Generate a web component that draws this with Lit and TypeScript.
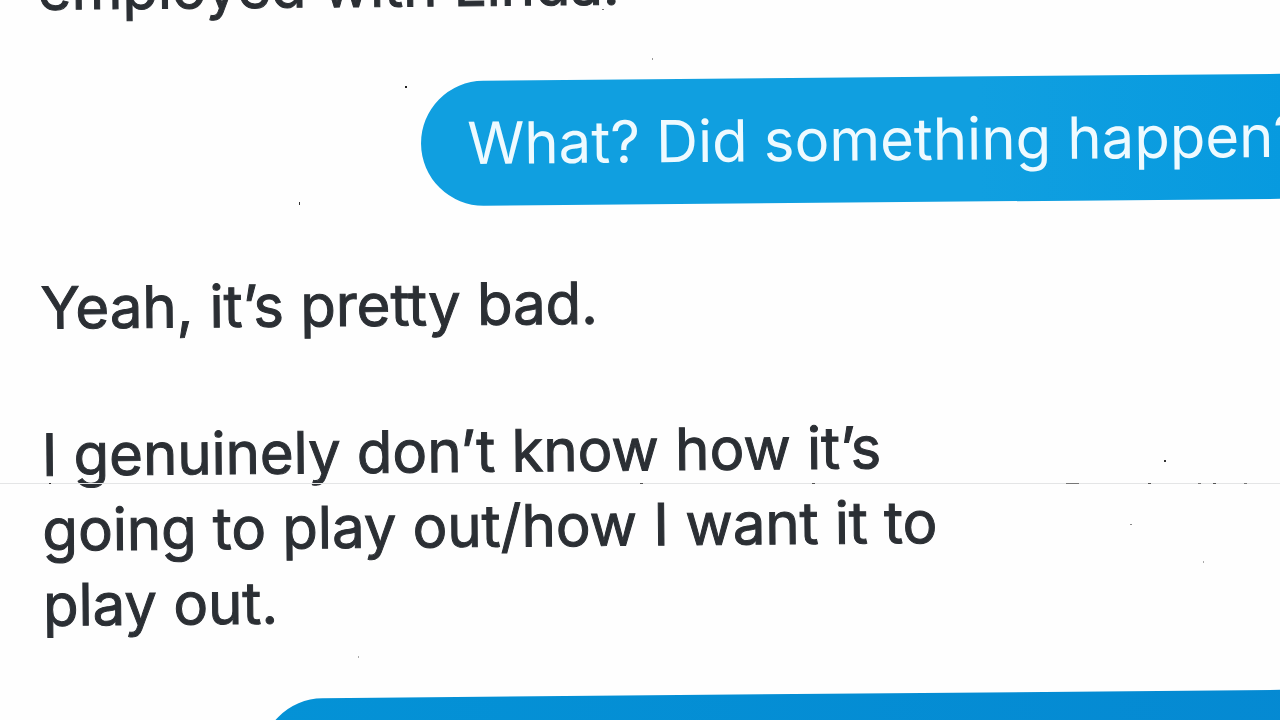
import { LitElement, html, css, svg } from "lit";
import { customElement } from "lit/decorators.js";

interface Message {
  from: "them" | "me";
  lines: string[];
}

const MESSAGES: Message[] = [
  { from: "them", lines: ["employed with Linda."] },
  { from: "me", lines: ["What? Did something happen?"] },
  { from: "them", lines: ["Yeah, it’s pretty bad."] },
  { from: "them", lines: ["I genuinely don’t know how it’s", "going to play out/how I want it to", "play out."] },
];

/* Dust on the scanned page: x, y, width, height, colour. */
const SPECKS: [number, number, number, number, string][] = [
  [405, 86, 2, 2, "#222222"],
  [299, 202, 1, 3, "#333333"],
  [652, 58, 1, 2, "#999999"],
  [602, 9, 2, 1, "#777777"],
  [358, 656, 1, 2, "#aaaaaa"],
  [1164, 460, 2, 2, "#333333"],
  [1130, 524, 2, 1, "#888888"],
  [1203, 561, 1, 2, "#aaaaaa"],
  [49, 483, 2, 1, "#333333"],
  [640, 483, 3, 1, "#555555"],
  [812, 483, 3, 1, "#555555"],
  [1066, 483, 13, 1, "#777777"],
  [1148, 483, 3, 1, "#555555"],
  [1198, 483, 3, 1, "#777777"],
  [1213, 483, 3, 1, "#555555"],
  [1244, 483, 3, 1, "#777777"],
];

@customElement("app-root")
export class AppRoot extends LitElement {
  static styles = css`
    :host {
      display: block;
      position: relative;
      height: 100vh;
      overflow: hidden;
      background: #fefefe;
      font-family: Inter, "Liberation Sans", sans-serif;
      font-size: 58px;
      line-height: 75px;
      color: #2b2f34;
    }
    .thread {
      display: flex;
      flex-direction: column;
      margin-top: -84px;
      padding-left: 41px;
      transform: rotate(-0.5deg);
      transform-origin: 0 50%;
    }
    .message {
      margin: 0;
      white-space: nowrap;
    }
    .them {
      padding: 36px 0;
      -webkit-text-stroke: 1px #2b2f34;
    }
    .me {
      align-self: flex-end;
      margin: 22px -71px 25px 0;
      padding: 25px 46px;
      border-radius: 64px;
      background: linear-gradient(90deg, #109fe0 60%, #0599df);
      color: #eefaff;
    }
    .next {
      height: 125px;
      margin: 22px -71px 0 216px;
      border-radius: 64px;
      background: linear-gradient(90deg, #0492d6, #0589d2);
    }
    .line {
      display: block;
    }
    .scan {
      position: absolute;
      inset: 0;
      width: 100%;
      height: 100%;
      pointer-events: none;
    }
  `;

  render() {
    return html`
      <main class="thread">
        ${MESSAGES.map(
          (m) => html`<p class="message ${m.from}">${m.lines.map((l) => html`<span class="line">${l}</span>`)}</p>`,
        )}
        <div class="next"></div>
      </main>
      <svg class="scan" aria-hidden="true">
        <rect y="483" width="100%" height="1" fill="#e4e5e6" />
        ${SPECKS.map(([x, y, w, h, c]) => svg`<rect x=${x} y=${y} width=${w} height=${h} fill=${c} />`)}
      </svg>
    `;
  }
}
